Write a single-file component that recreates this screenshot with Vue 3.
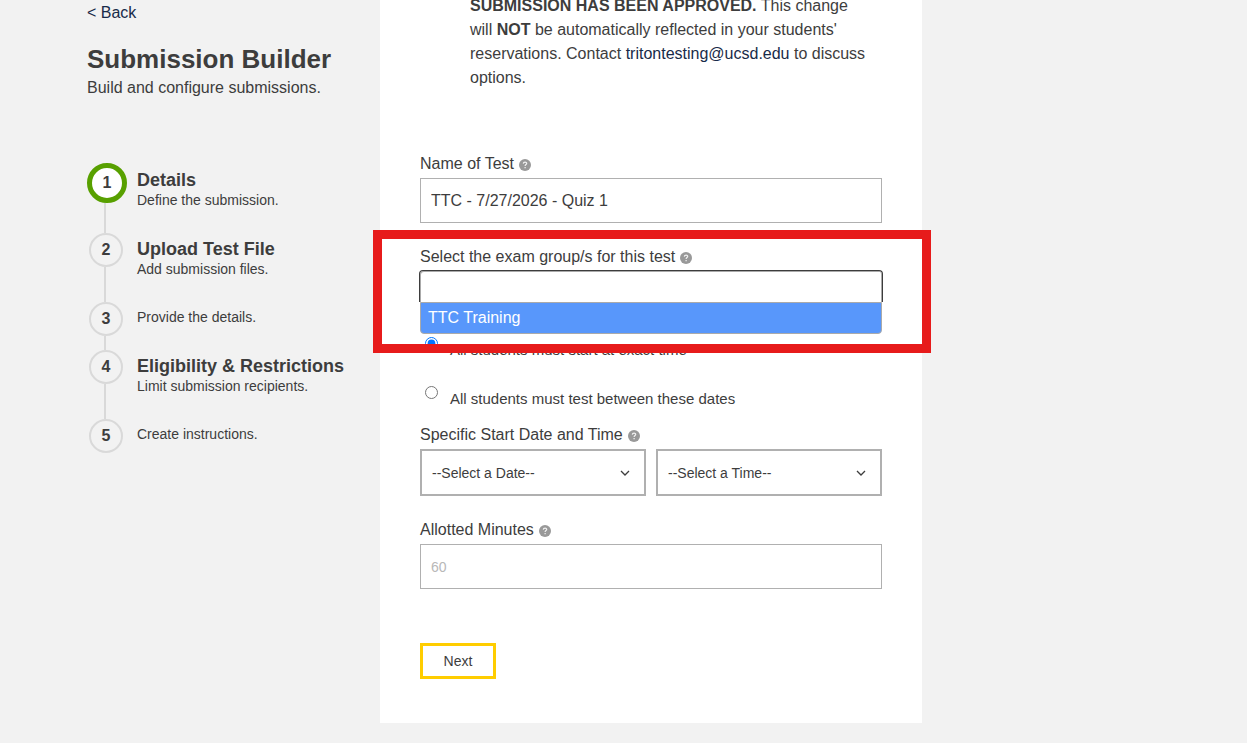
<script setup>
import { ref } from 'vue'

const steps = [
  { id: 1, title: 'Details', text: 'Define the submission.' },
  { id: 2, title: 'Upload Test File', text: 'Add submission files.' },
  { id: 3, title: '', text: 'Provide the details.' },
  { id: 4, title: 'Eligibility & Restrictions', text: 'Limit submission recipients.' },
  { id: 5, title: '', text: 'Create instructions.' },
]
const current = 1
const testName = ref('TTC - 7/27/2026 - Quiz 1')
const group = ref('')
const startMode = ref('exact')
const date = ref('')
const time = ref('')
const minutes = ref('')
</script>

<template>
  <div class="page">
    <aside class="side">
      <a class="back" href="#">&lt; Back</a>
      <h1>Submission Builder</h1>
      <p class="lead">Build and configure submissions.</p>
      <ol class="steps">
        <li
          v-for="step in steps"
          :key="step.id"
          class="step"
          :class="{ active: step.id === current, plain: !step.title }"
        >
          <span class="marker">{{ step.id }}</span>
          <div class="step-body">
            <h2 v-if="step.title">{{ step.title }}</h2>
            <p>{{ step.text }}</p>
          </div>
        </li>
      </ol>
    </aside>

    <main class="panel">
      <p class="notice">
        <strong>SUBMISSION HAS BEEN APPROVED.</strong> This change will <strong>NOT</strong> be automatically
        reflected in your students' reservations. Contact
        <a href="mailto:tritontesting@ucsd.edu">tritontesting@ucsd.edu</a> to discuss options.
      </p>

      <form @submit.prevent>
        <div class="field">
          <div class="label-row">
            <label for="name">Name of Test</label>
            <svg class="help" viewBox="0 0 12 12" aria-hidden="true">
              <circle cx="6" cy="6" r="6" />
              <path d="M4.3 4.6C4.4 2.5 7.8 2.6 7.7 4.5C7.6 5.6 6.1 5.6 6.1 7M6.1 8V9.3" />
            </svg>
          </div>
          <input id="name" v-model="testName" class="box" type="text" />
        </div>

        <div class="field group-field">
          <div class="label-row">
            <label for="group">Select the exam group/s for this test</label>
            <svg class="help" viewBox="0 0 12 12" aria-hidden="true">
              <circle cx="6" cy="6" r="6" />
              <path d="M4.3 4.6C4.4 2.5 7.8 2.6 7.7 4.5C7.6 5.6 6.1 5.6 6.1 7M6.1 8V9.3" />
            </svg>
          </div>
          <input id="group" v-model="group" class="search" type="text" autocomplete="off" />
          <ul class="options" role="listbox">
            <li role="option" aria-selected="true">TTC Training</li>
          </ul>
          <div class="frame"></div>
        </div>

        <div class="radios">
          <label class="radio">
            <input v-model="startMode" type="radio" name="mode" value="exact" />
            <span>All students must start at exact time</span>
          </label>
          <label class="radio">
            <input v-model="startMode" type="radio" name="mode" value="between" />
            <span>All students must test between these dates</span>
          </label>
        </div>

        <div class="field">
          <div class="label-row">
            <label for="date">Specific Start Date and Time</label>
            <svg class="help" viewBox="0 0 12 12" aria-hidden="true">
              <circle cx="6" cy="6" r="6" />
              <path d="M4.3 4.6C4.4 2.5 7.8 2.6 7.7 4.5C7.6 5.6 6.1 5.6 6.1 7M6.1 8V9.3" />
            </svg>
          </div>
          <div class="selects">
            <div class="select">
              <select id="date" v-model="date"><option value="">--Select a Date--</option></select>
              <svg class="chevron" viewBox="0 0 10 6" aria-hidden="true"><path d="M1 1L5 5L9 1" /></svg>
            </div>
            <div class="select">
              <select v-model="time" aria-label="Start time"><option value="">--Select a Time--</option></select>
              <svg class="chevron" viewBox="0 0 10 6" aria-hidden="true"><path d="M1 1L5 5L9 1" /></svg>
            </div>
          </div>
        </div>

        <div class="field minutes">
          <div class="label-row">
            <label for="minutes">Allotted Minutes</label>
            <svg class="help" viewBox="0 0 12 12" aria-hidden="true">
              <circle cx="6" cy="6" r="6" />
              <path d="M4.3 4.6C4.4 2.5 7.8 2.6 7.7 4.5C7.6 5.6 6.1 5.6 6.1 7M6.1 8V9.3" />
            </svg>
          </div>
          <input id="minutes" v-model="minutes" class="box" type="text" placeholder="60" />
        </div>

        <button class="next" type="submit">Next</button>
      </form>
    </main>
  </div>
</template>

<style>
body {
  background: #f2f2f2;
}
</style>

<style scoped>
* {
  box-sizing: border-box;
}
.page {
  display: grid;
  grid-template-columns: 293fr 542fr 325fr;
  align-items: start;
  padding: 0 0 20px 87px;
  background: #f2f2f2;
  color: #3d3d3d;
  font: 16px/24px "Liberation Sans", Arial, sans-serif;
  overflow: hidden;
}
h1,
h2,
p,
ol,
ul {
  margin: 0;
  padding: 0;
  list-style: none;
}
a {
  color: #182b49;
  text-decoration: none;
}
.side {
  padding-top: 1px;
}
.back {
  display: block;
}
h1 {
  margin-top: 18px;
  font-size: 26px;
  line-height: 32px;
}
.lead {
  margin-top: 1px;
}
.steps {
  margin-top: 64px;
}
.step {
  position: relative;
  display: flex;
}
.step:not(:last-child)::before {
  content: "";
  position: absolute;
  top: 34px;
  bottom: 0;
  left: 17px;
  width: 2px;
  background: #d9d9d9;
}
.marker {
  position: relative;
  flex: none;
  width: 34px;
  height: 34px;
  margin: 0 14px 0 2px;
  border: 2px solid #d9d9d9;
  border-radius: 50%;
  background: #f2f2f2;
  font-weight: bold;
  line-height: 30px;
  text-align: center;
}
.active .marker {
  width: 40px;
  height: 40px;
  margin: -1px 10px 0 0;
  border: 5px solid #58a000;
  background: #fff;
}
.step-body {
  padding: 5px 0 24px;
}
.plain .step-body {
  padding-top: 6px;
}
h2 {
  font-size: 18px;
  line-height: 22px;
}
.step-body p {
  font-size: 14px;
  line-height: 18px;
}
.panel {
  margin-top: -6px;
  padding: 0 40px 44px;
  background: #fff;
}
.notice {
  padding: 0 10px 0 50px;
}
form {
  margin-top: 61px;
}
.label-row {
  display: flex;
  align-items: center;
  gap: 5px;
  height: 27px;
  padding-bottom: 1px;
}
.help {
  width: 12px;
  height: 12px;
  margin-top: 1px;
}
.help circle {
  fill: #999;
}
.help path {
  fill: none;
  stroke: #f2f2f2;
  stroke-width: 1.2;
}
.box {
  display: block;
  width: 100%;
  height: 45px;
  padding: 0 10px;
  border: 1px solid #b0b0b0;
  border-radius: 0;
  background: #fff;
  color: #3d3d3d;
  font: inherit;
  outline: none;
}
.box::placeholder {
  color: #b8b8b8;
  font-size: 14px;
}
.group-field {
  position: relative;
  margin-top: 21px;
}
.search {
  display: block;
  width: calc(100% + 2px);
  height: 32px;
  margin: -1px -1px 0;
  padding: 0 8px;
  border: 1px solid #3d3d3d;
  border-bottom: 0;
  border-radius: 4px 4px 0 0;
  background: #fff;
  box-shadow: inset 1px 1px #aaa, inset -1px 0 #aaa;
  font: inherit;
  outline: none;
}
.options {
  border: 1px solid #aaa;
  border-radius: 0 0 4px 4px;
  background: #5897fb;
  color: #fff;
}
.options li {
  padding: 3px 7px;
}
.frame {
  position: absolute;
  inset: -14px -49px -19px -47px;
  z-index: 1;
  border: 9px solid #e71b1b;
  pointer-events: none;
}
.radios {
  display: grid;
  gap: 24px;
  margin: 3px 0 11px;
}
.radio {
  display: flex;
  font-size: 15px;
}
.radio input {
  width: 13px;
  height: 13px;
  margin: 0 12px 0 5px;
}
.radio span {
  margin-top: 1px;
}
.selects {
  display: grid;
  grid-template-columns: 1fr 1fr;
  gap: 10px;
}
.select {
  position: relative;
}
select {
  appearance: none;
  display: block;
  width: 100%;
  height: 47px;
  padding: 0 30px 0 10px;
  border: 2px solid #b0b0b0;
  border-radius: 0;
  background: #fff;
  color: #3d3d3d;
  font: 14px "Liberation Sans", Arial, sans-serif;
}
.chevron {
  position: absolute;
  top: 21px;
  right: 16px;
  width: 10px;
  height: 6px;
  fill: none;
  stroke: #3d3d3d;
  stroke-width: 1.3;
  pointer-events: none;
}
.minutes {
  margin-top: 21px;
}
.next {
  display: block;
  width: 76px;
  height: 36px;
  margin-top: 54px;
  padding: 0;
  border: 3px solid #ffcd00;
  background: #fff;
  color: #3d3d3d;
  font: 14px "Liberation Sans", Arial, sans-serif;
}
</style>
